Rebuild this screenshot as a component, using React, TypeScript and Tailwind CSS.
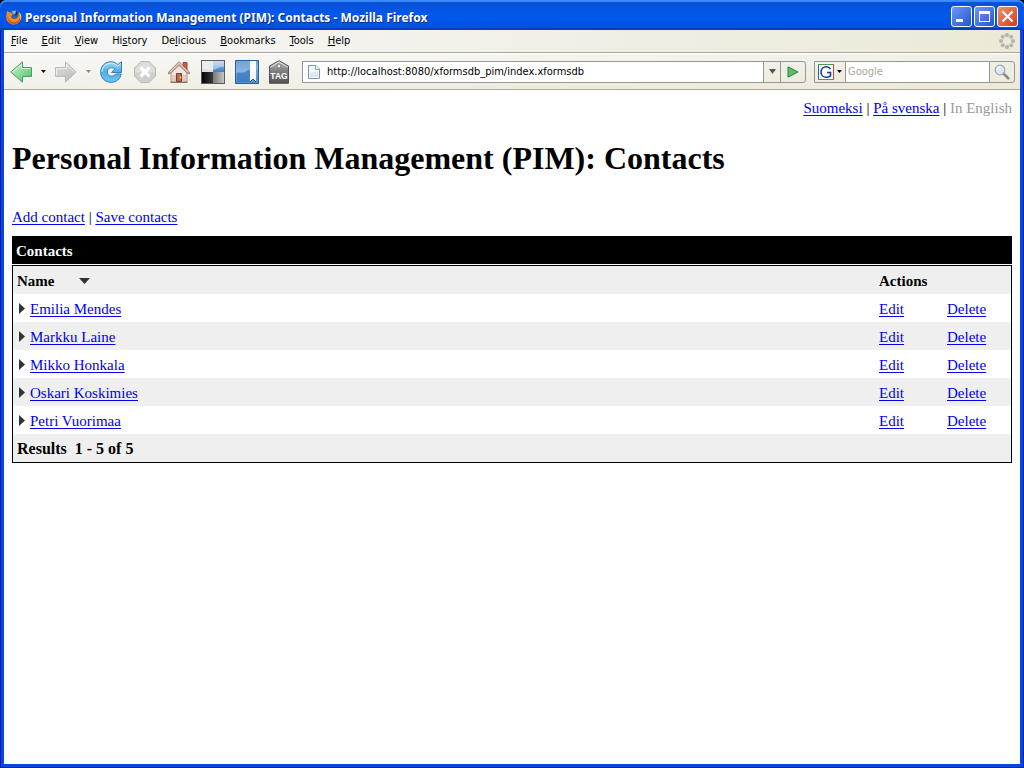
import React from 'react';

const contacts = ['Emilia Mendes', 'Markku Laine', 'Mikko Honkala', 'Oskari Koskimies', 'Petri Vuorimaa'];

const menus: [string, string, string][] = [
  ['', 'F', 'ile'],
  ['', 'E', 'dit'],
  ['', 'V', 'iew'],
  ['Hi', 's', 'tory'],
  ['De', 'l', 'icious'],
  ['', 'B', 'ookmarks'],
  ['', 'T', 'ools'],
  ['', 'H', 'elp'],
];

const linkClass = 'text-[#0000ee] underline decoration-1 underline-offset-2';

function FirefoxIcon() {
  return (
    <svg viewBox="0 0 16 16" className="size-4 shrink-0" aria-hidden="true">
      <circle cx="8.5" cy="7.5" r="6.5" fill="#2f62ad" />
      <path d="M6 2.5c2-1.400 4.500-1 5.500.5L9 5 6.500 4.500z" fill="#7db8e8" />
      <path d="M10 1.500l2 2-1 2.500-2 1z" fill="#18356f" />
      <path d="M1.500 1.500C2 3 3 3 4.500 3.500c.8.600.8 1.200 2.500 1.500-.3 1.300-1.800 1.200-1.800 2.500.5 2.300 3 3 5 2C12.500 8.300 13 6 12.500 3c2.500 2 3.500 5.500 2 8.300C12.800 15 8.500 16.500 5 15 1 13.300-.4 9.500.4 6 .5 4 1 3 1.500 1.500z" fill="#f08a24" />
      <path d="M1.800 7C1.800 10.500 4.500 13 8 13.300c3 0 5-2 5.800-4.300 1 3-2 6-5.600 6C3.500 15 .8 11 1.800 7z" fill="#d2521a" />
      <path d="M13 3c2.500 2 3 5 1.500 8 .1-3-.5-5.500-1.500-8z" fill="#ffd54a" />
    </svg>
  );
}

function BackIcon() {
  return (
    <svg viewBox="0 0 22 22" className="size-[22px]" aria-hidden="true">
      <defs>
        <linearGradient id="back" x2="1" y2="1">
          <stop stopColor="#d5f2d4" /><stop offset=".5" stopColor="#8fdc9c" /><stop offset="1" stopColor="#4fb56c" />
        </linearGradient>
      </defs>
      <path d="M.8 11 12.500.8v5.700h9v9h-9v5.700z" fill="url(#back)" stroke="#3fa562" />
      <path d="M2.500 11l9-7.500v4h9" fill="none" stroke="#d2f3d6" />
    </svg>
  );
}

function ForwardIcon() {
  return (
    <svg viewBox="0 0 22 22" className="size-[22px]" aria-hidden="true">
      <defs>
        <linearGradient id="forward" y2="1" x2=".5">
          <stop stopColor="#e8e8e6" /><stop offset="1" stopColor="#bdbdbb" />
        </linearGradient>
      </defs>
      <path d="M21.200 11 10.500.8v5.700H.5v9h10v5.700z" fill="url(#forward)" stroke="#b9b9b7" />
      <path d="M1.500 14V7.500h10v-4l8 7.500" fill="none" stroke="#eeeeec" />
    </svg>
  );
}

function ReloadIcon() {
  return (
    <svg viewBox="0 0 22 22" className="size-[22px]" aria-hidden="true">
      <defs>
        <linearGradient id="reload" y2="1" x2="0">
          <stop stopColor="#a9dcf7" /><stop offset=".45" stopColor="#4fb0e8" /><stop offset="1" stopColor="#6cc4f4" />
        </linearGradient>
      </defs>
      <path d="M17.800 3.600 21.500.7v10.800H11.500l3.400-3.700C13 6.300 9.600 6.300 8 8.700c-1.700 2.800 0 6.300 3.300 6.500 2.200.1 3.600-.9 4.400-2.200h5.500c-.8 5-5 8.300-10 8.300C5 21.300.7 17 .7 11S5 .8 11 .8c2.600 0 5 1 6.800 2.800z" fill="url(#reload)" stroke="#2f7fbe" />
      <path d="M2 11c0-5 4-8.700 9-8.700 2.500 0 4.500 1 6.500 2.700L20.500 3" fill="none" stroke="#d9f1fc" />
    </svg>
  );
}

function StopIcon() {
  return (
    <svg viewBox="0 0 22 22" className="size-[22px]" aria-hidden="true">
      <path d="M7 .5h8L21.500 7v8L15 21.500H7L.5 15V7z" fill="#cfcfcd" stroke="#babab8" />
      <path d="M7.500 1.500h7l6 6v4H1.500v-4z" fill="#dededc" />
      <path d="M6.500 6.500l9 9m0-9-9 9" stroke="#fff" strokeWidth="3.200" />
    </svg>
  );
}

function HomeIcon() {
  return (
    <svg viewBox="0 0 22 22" className="size-[22px]" aria-hidden="true">
      <path d="M15 1.500h4V9l-4-3z" fill="#c45a4a" stroke="#9a4a3e" />
      <path d="M3 10l8-7.500L19 10v11H3z" fill="#f3e5dc" stroke="#b19180" />
      <path d="M4 14h14v6H4z" fill="#e2cabd" />
      <path d="M11 .8.5 11v2L3 12l8-7.500 8 7.500 2.500 1v-2z" fill="#c4a798" stroke="#977768" strokeWidth=".7" />
      <path d="M2 11 11 2.300 20 11" fill="none" stroke="#e4d2c8" />
      <path d="M8.500 12.500h5v8h-5z" fill="#b56b58" stroke="#773f35" />
      <circle cx="12.500" cy="16.500" r="1" fill="#ffe900" />
      <path d="M2.500 21.300h17" stroke="#765f54" />
    </svg>
  );
}

function DeliciousIcon() {
  return (
    <svg viewBox="0 0 24 24" className="size-6" aria-hidden="true">
      <defs>
        <linearGradient id="dblack"><stop stopColor="#050505" /><stop offset="1" stopColor="#3b3b3b" /></linearGradient>
        <linearGradient id="dgray"><stop stopColor="#777" /><stop offset="1" stopColor="#c5c5c5" /></linearGradient>
        <linearGradient id="dblue" y2="1" x2="0"><stop stopColor="#a8c9ec" /><stop offset="1" stopColor="#3e7cc5" /></linearGradient>
      </defs>
      <path d="M0 0h24v24H0z" fill="#686868" />
      <path d="M1 1h11v11H1z" fill="#dcdfe3" /><path d="M12 1h11v11H12z" fill="url(#dblue)" />
      <path d="M1 12h11v11H1z" fill="url(#dblack)" /><path d="M12 12h11v11H12z" fill="url(#dgray)" />
      <path d="M1 1h22v6c-5-1-7 3-11 3C8 11 5 8 1 9z" fill="#fff" opacity=".38" />
      <path d="M.5.5h23v23H.5z" fill="none" stroke="#5c5c5c" />
    </svg>
  );
}

function BookmarkIcon() {
  return (
    <svg viewBox="0 0 24 24" className="size-6" aria-hidden="true">
      <defs>
        <linearGradient id="book" y2="1" x2="0"><stop stopColor="#3f7bbd" /><stop offset=".5" stopColor="#6aa2da" /><stop offset="1" stopColor="#5090d0" /></linearGradient>
      </defs>
      <path d="M.5.5h23v23H.5z" fill="url(#book)" stroke="#315c8e" />
      <path d="M1 1h22v9c-8-2-12 5-22 3z" fill="#a5caee" opacity=".5" />
      <path d="M2 12c8 2 10-2 13-3v13H2z" fill="#2e70b8" opacity=".55" />
      <path d="M15 1h6v21l-3-3-3 3z" fill="#f8fbff" />
      <path d="M15 22l3-3 3 3" fill="none" stroke="#285489" />
    </svg>
  );
}

function TagIcon() {
  return (
    <svg viewBox="0 0 20 24" className="h-6 w-5" aria-hidden="true">
      <defs>
        <linearGradient id="tag" y2="1" x2="0"><stop stopColor="#c8c8c8" /><stop offset=".4" stopColor="#858585" /><stop offset="1" stopColor="#505050" /></linearGradient>
      </defs>
      <path d="M.5 6 10 .7 19.500 6v17.300H.5z" fill="url(#tag)" stroke="#505050" />
      <path d="M1.500 7 10 2l8.500 5" fill="none" stroke="#ddd" />
      <circle cx="10" cy="6" r="2" fill="#f5f5f5" stroke="#777" />
      <text x="10" y="19" textAnchor="middle" fill="#fff" fontFamily="Liberation Sans" fontWeight="700" fontSize="8.500">TAG</text>
    </svg>
  );
}

function PageIcon() {
  return (
    <svg viewBox="0 0 12 14" className="h-3.5 w-3 shrink-0" aria-hidden="true">
      <path d="M.5.500h7.500l3.500 3.500v9.500H.5z" fill="#f5f9fc" stroke="#8095aa" />
      <path d="M7.500.5V4.500h4" fill="#fff" stroke="#8095aa" />
      <path d="M2 12V8l8-2v6z" fill="#dce8f1" />
    </svg>
  );
}

function Throbber() {
  return (
    <svg viewBox="0 0 16 16" className="size-4" fill="#b3b3b0" aria-hidden="true">
      <circle cx="8" cy="2" r="2" /><circle cx="12.200" cy="3.800" r="2" /><circle cx="14" cy="8" r="2" /><circle cx="12.200" cy="12.200" r="2" />
      <circle cx="8" cy="14" r="2" /><circle cx="3.800" cy="12.200" r="2" /><circle cx="2" cy="8" r="2" /><circle cx="3.800" cy="3.800" r="2" />
    </svg>
  );
}

function Caret({ className }: { className: string }) {
  return (
    <svg viewBox="0 0 5 3" preserveAspectRatio="none" className={className} fill="currentColor" aria-hidden="true">
      <path d="M0 0h5L2.500 3z" />
    </svg>
  );
}

function TitleBar() {
  const button = 'flex size-[21px] items-center justify-center rounded-[3px] border border-white';
  return (
    <header className="flex h-[30px] items-center rounded-t-md bg-linear-to-b from-[#0a4fd0] via-[#0058ee] to-[#0050dd] px-[6px] pt-[3px] shadow-[inset_0_2px_1px_#3c8cff,inset_0_-2px_1px_#003fc2]">
      <FirefoxIcon />
      <span className="ml-[3px] flex-1 whitespace-nowrap pt-[2px] font-['Noto_Sans','Open_Sans',sans-serif] text-[12px] font-bold text-white [text-shadow:1px_1px_#0a2a84]">
        Personal Information Management (PIM): Contacts - Mozilla Firefox
      </span>
      <div className="flex gap-[2px]">
        <button aria-label="Minimize" className={`${button} bg-linear-to-br from-[#6f98f4] to-[#2353d3]`}>
          <svg viewBox="0 0 19 19" className="size-[19px]"><path d="M4 12h7v3H4z" fill="#fff" /></svg>
        </button>
        <button aria-label="Maximize" className={`${button} bg-linear-to-br from-[#6f98f4] to-[#2353d3]`}>
          <svg viewBox="0 0 19 19" className="size-[19px]"><path d="M4 4h11v11H4zm1 3v7h9V7z" fill="#fff" fillRule="evenodd" /></svg>
        </button>
        <button aria-label="Close" className={`${button} bg-linear-to-br from-[#f0906f] to-[#cf3a15]`}>
          <svg viewBox="0 0 19 19" className="size-[19px]"><path d="M4.500 4.500l10 10m0-10-10 10" stroke="#fff" strokeWidth="2.200" /></svg>
        </button>
      </div>
    </header>
  );
}

function MenuBar() {
  return (
    <nav className="flex h-[23px] items-center gap-[14px] border-b border-[#aca899] bg-linear-to-r from-[#f7f7f7] to-[#ece9d8] pr-[5px] pl-[7px] text-[11px] text-black">
      {menus.map(([before, key, after]) => (
        <button key={before + key + after} className="whitespace-nowrap pt-px">
          {before}<span className="underline underline-offset-1">{key}</span>{after}
        </button>
      ))}
      <div className="ml-auto"><Throbber /></div>
    </nav>
  );
}

function Toolbar() {
  return (
    <div className="flex h-[37px] items-center border-t border-b border-t-white border-b-[#aca899] bg-linear-to-br from-[#f8f8f7] to-[#ece9d8] pr-[5px] pl-[6px]">
      <button aria-label="Back"><BackIcon /></button>
      <button aria-label="Back history" className="flex w-[23px] justify-center text-black"><Caret className="h-[3px] w-[5px]" /></button>
      <button aria-label="Forward"><ForwardIcon /></button>
      <button aria-label="Forward history" className="flex w-[23px] justify-center text-[#888]"><Caret className="h-[3px] w-[5px]" /></button>
      <div className="flex items-center gap-3">
        <button aria-label="Reload"><ReloadIcon /></button>
        <button aria-label="Stop"><StopIcon /></button>
        <button aria-label="Home"><HomeIcon /></button>
      </div>
      <div className="ml-[11px] flex items-center gap-[10px]">
        <button aria-label="Delicious"><DeliciousIcon /></button>
        <button aria-label="Bookmarks"><BookmarkIcon /></button>
        <button aria-label="Tag"><TagIcon /></button>
      </div>
      <div className="ml-[13px] flex h-[22px] min-w-0 flex-1 rounded-r-[3px] border border-[#969696]">
        <label className="flex min-w-0 flex-1 items-center bg-white pl-[5px]">
          <PageIcon />
          <input aria-label="Location" defaultValue="http://localhost:8080/xformsdb_pim/index.xformsdb" className="ml-[7px] min-w-0 flex-1 pt-[2px] text-[11px] text-black outline-none" />
        </label>
        <button aria-label="Show history" className="flex w-[17px] items-center justify-center border-l border-[#969696] text-[#555]"><Caret className="h-[5px] w-[7px]" /></button>
        <button aria-label="Go" className="flex w-[25px] items-center justify-center border-l border-[#969696]">
          <svg viewBox="0 0 12 12" className="size-3"><path d="M1 .8 11 6 1 11.200z" fill="#5dba70" stroke="#25863d" /></svg>
        </button>
      </div>
      <div className="ml-2 flex h-[22px] w-[201px] rounded-r-[3px] border border-[#969696]">
        <button aria-label="Search engine" className="flex w-[30px] items-center gap-[3px] pl-[3px]">
          <svg viewBox="0 0 16 16" className="size-4">
            <path d="M0 0h16v16H0z" fill="#fff" />
            <path d="M.5 0v16" stroke="#2463d4" /><path d="M0 .5h16" stroke="#45a052" /><path d="M15.500 0v16" stroke="#d33" /><path d="M0 15.500h16" stroke="#3ba14a" />
            <path d="M12.500 5C11.500 3.300 10 2.700 8.300 2.700 5.300 2.700 3 5 3 8s2.200 5.300 5.200 5.300c1.700 0 3.300-.6 4.300-1.500V8.500H9" fill="none" stroke="#173a8c" strokeWidth="1.600" />
          </svg>
          <Caret className="h-[3px] w-[5px]" />
        </button>
        <input aria-label="Search" placeholder="Google" className="min-w-0 flex-1 border-x border-[#969696] bg-white pt-[2px] pl-[2px] text-[11px] outline-none placeholder:text-[#aca899]" />
        <button aria-label="Search" className="flex w-6 items-center justify-center">
          <svg viewBox="0 0 16 16" className="size-4"><path d="M9.500 9.500 15 15" stroke="#888" strokeWidth="2.500" /><circle cx="6" cy="6" r="4.800" fill="#d5ebfa" stroke="#9aa8b3" strokeWidth="1.200" /><path d="M3 6a3 3 0 013-3" fill="none" stroke="#fff" strokeWidth="1.400" /></svg>
        </button>
      </div>
    </div>
  );
}

function ContactsTable() {
  return (
    <table className="mt-[9px] w-full border-separate border-spacing-0 border border-black text-left">
      <caption className="mb-px h-7 bg-black pl-1 text-left font-bold leading-[30px] text-white">Contacts</caption>
      <thead>
        <tr className="h-7 bg-[#efefef]">
          <th className="p-0 pt-[2px] pl-1">
            <div className="flex items-center gap-6">
              Name
              <button aria-label="Sort by name" className="text-[#333]"><Caret className="h-[6px] w-[11px]" /></button>
            </div>
          </th>
          <th colSpan={2} className="p-0 pt-[2px] pl-1">Actions</th>
        </tr>
      </thead>
      <tbody>
        {contacts.map((name) => (
          <tr key={name} className="h-7 even:bg-[#efefef]">
            <td className="p-0 pt-[2px] pl-[6px]">
              <div className="flex items-center gap-[5px]">
                <button aria-label={`Expand ${name}`} className="pb-[2px]">
                  <svg viewBox="0 0 6 11" className="h-[11px] w-[6px]"><path d="M0 0l6 5.500L0 11z" fill="#333" /></svg>
                </button>
                <a href="#contact" className={linkClass}>{name}</a>
              </div>
            </td>
            <td className="w-[68px] p-0 pt-[2px] pl-1"><a href="#edit" className={linkClass}>Edit</a></td>
            <td className="w-[68px] p-0 pt-[2px] pl-1"><a href="#delete" className={linkClass}>Delete</a></td>
          </tr>
        ))}
      </tbody>
      <tfoot>
        <tr className="h-7 bg-[#efefef]">
          <td colSpan={3} className="p-0 pt-[2px] pl-1 text-[16px] leading-5 font-bold">Results&nbsp; 1 - 5 of 5</td>
        </tr>
      </tfoot>
    </table>
  );
}

export default function App() {
  return (
    <div className="bg-black">
      <div className="flex min-h-screen flex-col rounded-t-md bg-[#0019b0] font-['DejaVu_Sans_Condensed','Noto_Sans',sans-serif]">
        <TitleBar />
        <div className="flex flex-1 flex-col px-px pb-px">
          <div className="flex flex-1 flex-col border-x-3 border-b-3 border-[#0846dc]">
            <MenuBar />
            <Toolbar />
            <main className="flex-1 bg-white px-2 pt-2 font-['Liberation_Serif',serif] text-[15px] leading-5 text-black">
              <div className="text-right">
                <a href="#fi" className={linkClass}>Suomeksi</a> | <a href="#sv" className={linkClass}>På svenska</a> | <span className="text-[#999]">In English</span>
              </div>
              <h1 className="mt-[22px] text-[32px] leading-9 font-bold">Personal Information Management (PIM): Contacts</h1>
              <div className="mt-[31px]">
                <a href="#add" className={linkClass}>Add contact</a> | <a href="#save" className={linkClass}>Save contacts</a>
              </div>
              <ContactsTable />
            </main>
          </div>
        </div>
      </div>
    </div>
  );
}
